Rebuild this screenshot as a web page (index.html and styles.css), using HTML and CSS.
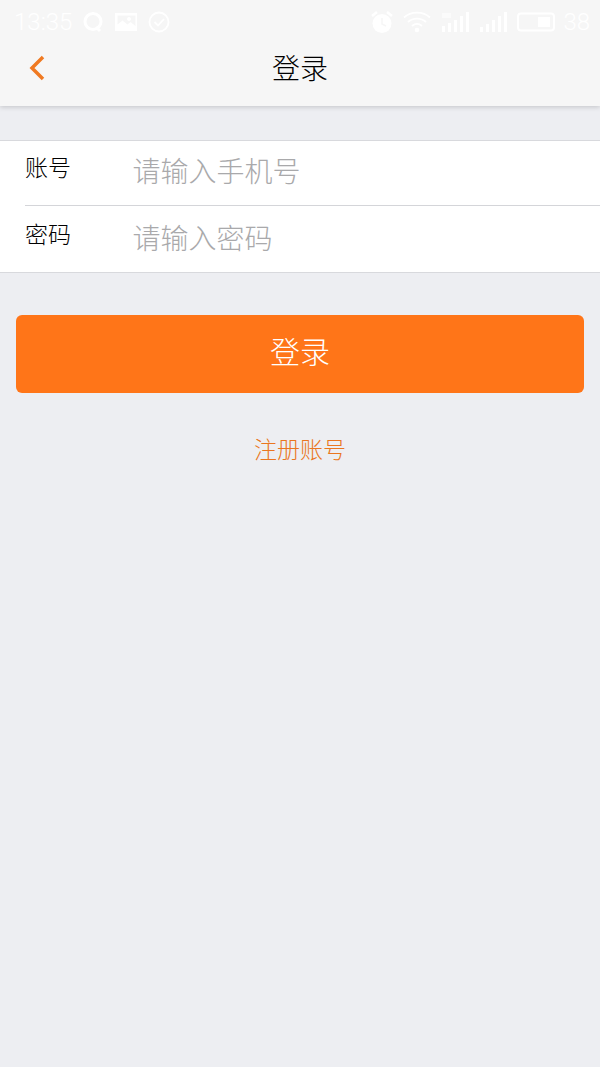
FILE: index.html
```html
<!DOCTYPE html>
<html lang="zh-CN">
<head>
<meta charset="utf-8">
<title>登录</title>
<link rel="stylesheet" href="styles.css">
</head>
<body>
<header class="top">
  <div class="status">
    <div class="status-group">
      <span class="time">13:35</span>
      <svg class="ic" width="22" height="22" viewBox="0 0 22 22"><circle cx="11" cy="10.500" r="8" fill="none" stroke="#fff" stroke-width="3"/><path d="M14 16l4 4" stroke="#fff" stroke-width="3"/></svg>
      <svg class="ic" width="24" height="20" viewBox="0 0 24 20"><path fill="#fff" fill-rule="evenodd" d="M1 1h22v18H1zM3.500 3.500v9l5-4 5 4 3-2.500 5 4v-10.500zM15 5a2 2 0 1 0 .01 0z"/></svg>
      <svg class="ic" width="22" height="22" viewBox="0 0 22 22"><circle cx="11" cy="11" r="9.500" fill="none" stroke="#fff" stroke-width="1.800"/><path d="M6.500 11l3.500 3.500 6-6.500" fill="none" stroke="#fff" stroke-width="1.800"/></svg>
    </div>
    <div class="status-group right">
      <svg class="ic" width="22" height="24" viewBox="0 0 22 24"><circle cx="11" cy="13.500" r="9.500" fill="#fff"/><path d="M1 6l5-4M21 6l-5-4" stroke="#fff" stroke-width="2.500"/><path d="M11 8v6l4 2" fill="none" stroke="#f6f6f6" stroke-width="1.500"/></svg>
      <svg class="ic" width="28" height="22" viewBox="0 0 28 22"><g fill="none" stroke="#fff" stroke-width="1.800"><path d="M1 6.500c7-6.500 19-6.500 26 0"/><path d="M5 11c5-4.500 13-4.500 18 0"/><path d="M9 15c3-2.500 7-2.500 10 0"/></g><circle cx="14" cy="19" r="2.300" fill="#fff"/></svg>
      <svg class="ic" width="28" height="22" viewBox="0 0 28 22"><g fill="#fff"><rect x="1" y="15" width="3" height="6"/><rect x="7" y="12" width="3" height="9"/><rect x="13" y="9" width="3" height="12"/><rect x="19" y="5" width="3" height="16"/><rect x="25" y="1" width="3" height="20"/></g><rect x="1" y="2" width="9" height="5" fill="#fff" opacity=".6"/></svg>
      <svg class="ic" width="28" height="22" viewBox="0 0 28 22"><g fill="#fff"><rect x="1" y="16" width="3" height="5"/><rect x="7" y="13" width="3" height="8"/><rect x="13" y="9" width="3" height="12"/><rect x="19" y="5" width="3" height="16"/><rect x="25" y="1" width="3" height="20"/></g></svg>
      <svg class="ic" width="38" height="20" viewBox="0 0 38 20"><rect x="1" y="1.500" width="36" height="17" rx="3" fill="none" stroke="#fff" stroke-width="2"/><rect x="21" y="5" width="12" height="10" fill="#fff"/></svg>
      <span class="level">38</span>
    </div>
  </div>
  <nav class="nav">
    <svg class="back" width="18" height="26" viewBox="0 0 18 26"><path d="M15 2L4 13l11 11" fill="none" stroke="#f07a22" stroke-width="3.500"/></svg>
    <h1 class="title">登录</h1>
  </nav>
</header>
<main>
  <form class="form">
    <label class="row first">
      <span class="label">账号</span>
      <span class="hint">请输入手机号</span>
    </label>
    <label class="row second">
      <span class="label">密码</span>
      <span class="hint">请输入密码</span>
    </label>
  </form>
  <div class="submit">登录</div>
  <a class="register">注册账号</a>
</main>
</body>
</html>
```

FILE: styles.css
```css
* { box-sizing: border-box; }
html, body { margin: 0; padding: 0; }
body {
  width: 600px;
  height: 1067px;
  overflow: hidden;
  background: #edeef2;
  font-family: "Noto Sans CJK SC", "Liberation Sans", sans-serif;
  font-weight: 300;
}
.top {
  height: 106px;
  background: #f6f6f6;
  box-shadow: 0 1px 5px rgba(0, 0, 0, 0.18);
}
.status {
  height: 43px;
  display: flex;
  justify-content: space-between;
  align-items: center;
  padding: 0 10px 0 14px;
}
.status-group { display: flex; align-items: center; gap: 10px; }
.time, .level {
  font-family: Roboto, "Liberation Sans", sans-serif;
  font-size: 24px;
  font-weight: 300;
  color: #fff;
  line-height: 1;
}
.level { margin-left: -2px; }
.ic { display: block; flex: none; }
.nav {
  height: 63px;
  display: flex;
  align-items: center;
  justify-content: center;
  position: relative;
}
.back { position: absolute; left: 28px; top: 12px; }
.title {
  margin: 0 0 15px;
  font-size: 28px;
  font-weight: 300;
  line-height: 40px;
  color: #000;
}
main { display: flex; flex-direction: column; padding-top: 34px; }
.form {
  height: 133px;
  background: #fff;
  border-top: 1px solid #d8d9dd;
  border-bottom: 1px solid #d8d9dd;
  padding-left: 25px;
}
.row {
  height: 65px;
  display: flex;
  align-items: center;
}
.row.first { border-bottom: 1px solid #d4d5d9; }
.row.second { height: 66px; padding-top: 2px; }
.label {
  width: 107.5px;
  font-size: 23px;
  line-height: 32px;
  color: #000;
  margin-bottom: 14px;
}
.hint {
  font-size: 28px;
  line-height: 40px;
  color: #a9a9ab;
  margin-bottom: 6px;
}
.submit {
  margin: 42px 16px 0;
  height: 78px;
  background: #ff7518;
  border-radius: 6px;
  color: #fff;
  font-size: 30px;
  line-height: 70px;
  text-align: center;
}
.register {
  margin-top: 38px;
  text-align: center;
  font-size: 23px;
  line-height: 34px;
  color: #ea7620;
}
```
